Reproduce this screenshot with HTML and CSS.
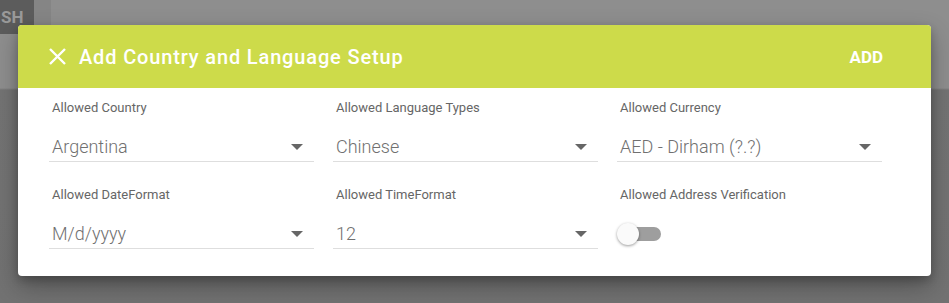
FILE: index.html
```html
<!DOCTYPE html>
<html lang="en">
<head>
  <meta charset="UTF-8" />
  <title>Add Country and Language Setup</title>
  <link rel="stylesheet" href="styles.css">
</head>
<body>
  <div class="page">
    <div class="toolbar">
      <div class="tool-btn">SH</div>
      <div class="tool-gap"></div>
    </div>
  </div>

  <div class="dialog">
    <div class="dialog-header">
      <svg class="close" width="19" height="19" viewBox="0 0 19 19">
        <path d="M2 2 L17 17 M17 2 L2 17" stroke="#fff" stroke-width="2.4" fill="none"/>
      </svg>
      <span class="dialog-title">Add Country and Language Setup</span>
      <span class="dialog-action">ADD</span>
    </div>

    <div class="dialog-body">
      <div class="field">
        <label>Allowed Country</label>
        <div class="select"><span>Argentina</span><i class="caret"></i></div>
      </div>
      <div class="field">
        <label>Allowed Language Types</label>
        <div class="select"><span>Chinese</span><i class="caret"></i></div>
      </div>
      <div class="field">
        <label>Allowed Currency</label>
        <div class="select"><span>AED - Dirham (?.?)</span><i class="caret"></i></div>
      </div>
      <div class="field">
        <label>Allowed DateFormat</label>
        <div class="select"><span>M/d/yyyy</span><i class="caret"></i></div>
      </div>
      <div class="field">
        <label>Allowed TimeFormat</label>
        <div class="select"><span>12</span><i class="caret"></i></div>
      </div>
      <div class="field">
        <label>Allowed Address Verification</label>
        <div class="toggle">
          <div class="toggle-track"></div>
          <div class="toggle-thumb"></div>
        </div>
      </div>
    </div>
  </div>
</body>
</html>
```

FILE: styles.css
```css
body {
  margin: 0;
  font-family: Roboto, 'Liberation Sans', sans-serif;
  background-color: #727272;
  height: 303px;
  overflow: hidden;
}

.page {
  height: 303px;
  background: linear-gradient(#8e8e8e 0, #8e8e8e 88px, #747474 90px, #727272 100%);
}

.toolbar {
  display: flex;
  height: 34px;
}

.tool-btn {
  width: 33px;
  background-color: #5c5c5c;
  color: #9a9a9a;
  font-weight: 700;
  font-size: 17px;
  line-height: 34px;
  padding-left: 1px;
  overflow: hidden;
}

.tool-gap {
  width: 17px;
  background-color: #858585;
}

.dialog {
  position: absolute;
  left: 18px;
  top: 25px;
  width: 913px;
  height: 251px;
  background-color: #fff;
  border-radius: 4px;
  overflow: hidden;
  box-shadow: 0 10px 24px rgba(0, 0, 0, 0.3), 0 4px 8px rgba(0, 0, 0, 0.2);
}

.dialog-header {
  height: 63px;
  background-color: #cddb4a;
  display: flex;
  align-items: center;
  padding: 0 48px 0 30px;
  color: #fff;
}

.close {
  margin-right: 12px;
}

.dialog-title {
  font-size: 20px;
  font-weight: 500;
  letter-spacing: 0.85px;
  flex: 1;
}

.dialog-action {
  font-size: 17px;
  font-weight: 700;
}

.dialog-body {
  display: grid;
  grid-template-columns: 265px 265px 265px;
  column-gap: 19px;
  row-gap: 25px;
  padding: 12px 0 0 31px;
}

.field label {
  display: block;
  font-size: 13px;
  font-weight: 400;
  color: #666;
  line-height: 16px;
  padding-left: 3px;
}

.select {
  display: flex;
  align-items: center;
  justify-content: space-between;
  margin-top: 17px;
  height: 28px;
  border-bottom: 1px solid #dedede;
  padding: 0 11px 0 3px;
}

.select span {
  font-size: 18px;
  font-weight: 300;
  color: #707070;
  line-height: 28px;
}

.caret {
  width: 0;
  height: 0;
  border-left: 6px solid transparent;
  border-right: 6px solid transparent;
  border-top: 6px solid #666;
}

.toggle {
  position: relative;
  margin-top: 17px;
  height: 29px;
}

.toggle-track {
  position: absolute;
  left: 11px;
  top: 7px;
  width: 33px;
  height: 14px;
  border-radius: 7px;
  background-color: #9e9e9e;
}

.toggle-thumb {
  position: absolute;
  left: 0;
  top: 3px;
  width: 22px;
  height: 22px;
  border-radius: 50%;
  background-color: #fafafa;
  box-shadow: 0 1px 3px rgba(0, 0, 0, 0.4);
}
```
